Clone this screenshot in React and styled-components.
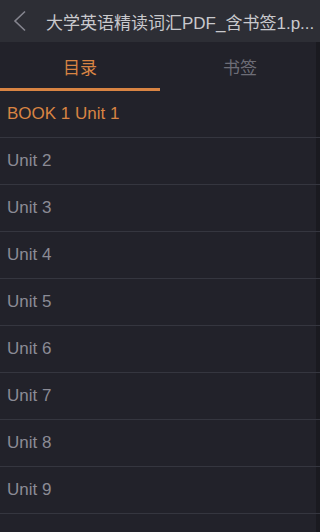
import React from 'react';
import styled, { createGlobalStyle } from 'styled-components';

const colors = {
  header: '#2d2e35',
  body: '#22222a',
  line: '#35363f',
  orange: '#d98443',
  gray: '#8b8b95',
  title: '#c9c9cd',
  tab: '#6d6d77',
};

const GlobalStyle = createGlobalStyle`
  html, body {
    margin: 0;
    padding: 0;
    background: ${colors.body};
  }
  body {
    font-family: "Liberation Sans", "Noto Sans CJK SC", sans-serif;
  }
`;

const Screen = styled.div`
  width: 320px;
  height: 532px;
  overflow: hidden;
  display: flex;
  flex-direction: column;
  background: ${colors.body};
`;

const TopBar = styled.header`
  height: 42px;
  flex-shrink: 0;
  display: flex;
  align-items: center;
  background: ${colors.header};
  padding: 0 2px 0 12px;
`;

const BackButton = styled.div`
  width: 34px;
  display: flex;
  align-items: center;
  flex-shrink: 0;
`;

const Title = styled.h1`
  margin: 0;
  flex: 1;
  min-width: 0;
  font-size: 17px;
  font-weight: normal;
  color: ${colors.title};
  white-space: nowrap;
`;

const Body = styled.div`
  flex: 1;
  display: flex;
  flex-direction: column;
  box-shadow: inset -4px 0 0 #1a1a20;
`;

const Tabs = styled.nav`
  height: 49px;
  flex-shrink: 0;
  display: grid;
  grid-template-columns: 1fr 1fr;
`;

const Tab = styled.div`
  display: flex;
  align-items: center;
  justify-content: center;
  font-size: 17px;
  color: ${(p) => (p.$active ? colors.orange : colors.tab)};
  border-bottom: 3px solid ${(p) => (p.$active ? colors.orange : 'transparent')};
  padding-top: 2px;
`;

const List = styled.ul`
  list-style: none;
  margin: 0;
  padding: 0;
`;

const Row = styled.li`
  height: 46px;
  display: flex;
  align-items: center;
  padding-left: 7px;
  font-size: 17px;
  color: ${(p) => (p.$active ? colors.orange : colors.gray)};
  border-bottom: 1px solid ${colors.line};
`;

const items = [
  'BOOK 1 Unit 1',
  'Unit 2',
  'Unit 3',
  'Unit 4',
  'Unit 5',
  'Unit 6',
  'Unit 7',
  'Unit 8',
  'Unit 9',
];

export default function App() {
  return (
    <>
      <GlobalStyle />
      <Screen>
        <TopBar>
          <BackButton>
            <svg width="16" height="22" viewBox="0 0 16 22">
              <path d="M13 1.5 L3 11 L13 20.5" fill="none" stroke="#85858f" strokeWidth="1.6" />
            </svg>
          </BackButton>
          <Title>大学英语精读词汇PDF_含书签1.p...</Title>
        </TopBar>
        <Body>
          <Tabs>
            <Tab $active>目录</Tab>
            <Tab>书签</Tab>
          </Tabs>
          <List>
            {items.map((t, i) => (
              <Row key={t} $active={i === 0}>
                {t}
              </Row>
            ))}
          </List>
        </Body>
      </Screen>
    </>
  );
}
